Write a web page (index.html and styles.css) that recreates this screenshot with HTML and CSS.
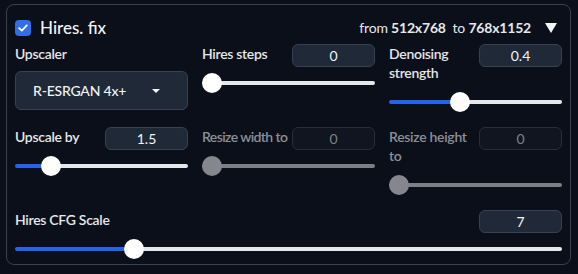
FILE: index.html
```html
<html lang="en">
	<head>
		<meta charset="UTF-8" />
		<meta name="viewport" content="width=device-width, initial-scale=1.0" />
		<title>Hires. fix</title>
		<link rel="stylesheet" href="styles.css">
	</head>
	<body>
		<div class="panel">
			<div class="panel-head">
				<label class="toggle">
					<span class="checkbox">
						<svg width="10" height="8" viewBox="0 0 10 8"><path d="M1.2 4.2 L3.8 6.6 L8.8 1.4" fill="none" stroke="#fff" stroke-width="1.8" stroke-linecap="round" stroke-linejoin="round"/></svg>
					</span>
					Hires. fix
				</label>
				<div class="summary">
					<span>from <b>512x768</b>&nbsp; to <b>768x1152</b></span>
					<span class="caret-big"></span>
				</div>
			</div>

			<div class="grid">
				<div class="field">
					<div class="field-top">
						<span class="label">Upscaler</span>
					</div>
					<div class="dropdown">
						<span>R-ESRGAN 4x+</span>
						<span class="caret"></span>
					</div>
				</div>

				<div class="field">
					<div class="field-top">
						<span class="label">Hires steps</span>
						<input class="num" type="number" value="0">
					</div>
					<input class="slider" type="range" min="0" max="150" value="0" style="--fill: 5%">
				</div>

				<div class="field">
					<div class="field-top">
						<span class="label">Denoising strength</span>
						<input class="num" type="number" value="0.4">
					</div>
					<input class="slider" type="range" min="0" max="1" step="0.01" value="0.4" style="--fill: 41%">
				</div>

				<div class="field">
					<div class="field-top">
						<span class="label">Upscale by</span>
						<input class="num" type="number" value="1.5">
					</div>
					<input class="slider" type="range" min="1" max="4" step="0.05" value="1.5" style="--fill: 21%">
				</div>

				<div class="field disabled">
					<div class="field-top">
						<span class="label nowrap">Resize width to</span>
						<input class="num" type="number" value="0" disabled>
					</div>
					<input class="slider" type="range" min="0" max="2048" value="0" disabled>
				</div>

				<div class="field disabled">
					<div class="field-top">
						<span class="label">Resize height to</span>
						<input class="num" type="number" value="0" disabled>
					</div>
					<input class="slider" type="range" min="0" max="2048" value="0" disabled>
				</div>

				<div class="field wide">
					<div class="field-top">
						<span class="label">Hires CFG Scale</span>
						<input class="num" type="number" value="7">
					</div>
					<input class="slider" type="range" min="1" max="30" step="0.5" value="7" style="--fill: 21.8%">
				</div>
			</div>
		</div>
	</body>
</html>
```

FILE: styles.css
```css
body {
	margin: 0;
	background: #0b0f19;
	font-family: Lato, "Noto Sans", sans-serif;
	color: #e5e7eb;
}
.panel {
	margin: 4px 0 0 6px;
	width: 547px;
	padding: 10px 8px 5px 8px;
	border: 1px solid #374151;
	border-radius: 8px;
}
.panel-head {
	display: flex;
	justify-content: space-between;
	align-items: center;
	height: 25px;
	margin-bottom: 4px;
}
.toggle {
	display: flex;
	align-items: center;
	gap: 9px;
	font-size: 17px;
	font-weight: 500;
	color: #f3f4f6;
}
.checkbox {
	width: 16px;
	height: 16px;
	border-radius: 4px;
	background: #2f6ee6;
	display: flex;
	align-items: center;
	justify-content: center;
}
.summary {
	display: flex;
	align-items: center;
	font-size: 14px;
	letter-spacing: -0.2px;
	color: #e5e7eb;
	padding-right: 5px;
	white-space: nowrap;
}
.summary b {
	font-weight: 700;
}
.caret-big {
	width: 0;
	height: 0;
	margin-left: 14px;
	border-left: 6px solid transparent;
	border-right: 6px solid transparent;
	border-top: 10px solid #f3f4f6;
}
.grid {
	display: grid;
	grid-template-columns: 173px 173px 173px;
	column-gap: 14px;
	row-gap: 15px;
}
.wide {
	grid-column: 1 / 4;
}
.field-top {
	display: flex;
	justify-content: space-between;
	align-items: flex-start;
	gap: 4px;
}
.label {
	font-size: 14px;
	font-weight: 600;
	letter-spacing: -0.3px;
	line-height: 19px;
	padding-bottom: 5px;
	color: #e5e7eb;
}
.nowrap {
	white-space: nowrap;
	letter-spacing: -0.6px;
	min-width: 0;
}
.num {
	flex: none;
	width: 83px;
	height: 23px;
	box-sizing: border-box;
	background: #1f2937;
	border: 1px solid #374151;
	border-radius: 6px;
	color: #f3f4f6;
	font-family: inherit;
	font-size: 14px;
	text-align: center;
	padding: 0;
	-moz-appearance: textfield;
}
.num::-webkit-inner-spin-button,
.num::-webkit-outer-spin-button {
	-webkit-appearance: none;
	margin: 0;
}
.dropdown {
	margin-top: 3px;
	height: 39px;
	box-sizing: border-box;
	background: #1f2937;
	border: 1px solid #374151;
	border-radius: 6px;
	display: flex;
	align-items: center;
	justify-content: space-between;
	padding: 0 27px 0 17px;
	font-size: 14px;
	font-weight: 500;
	letter-spacing: -0.2px;
	color: #f3f4f6;
}
.caret {
	width: 0;
	height: 0;
	border-left: 4px solid transparent;
	border-right: 4px solid transparent;
	border-top: 4px solid #f3f4f6;
}
.slider {
	-webkit-appearance: none;
	appearance: none;
	display: block;
	width: 100%;
	height: 20px;
	margin: 5px 0 0 0;
	background: transparent;
	--fill: 0%;
}
.slider::-webkit-slider-runnable-track {
	height: 4px;
	border-radius: 2px;
	background: linear-gradient(to right, #2563eb var(--fill), #e5e7eb var(--fill));
}
.slider::-webkit-slider-thumb {
	-webkit-appearance: none;
	width: 20px;
	height: 20px;
	margin-top: -8px;
	border-radius: 50%;
	background: #ffffff;
	border: none;
}
.disabled .label {
	color: #8b8f98;
}
.disabled .num {
	background: #111520;
	border-color: #272d39;
	color: #7d828c;
}
.disabled .slider::-webkit-slider-runnable-track {
	background: #7d7f86;
}
.disabled .slider::-webkit-slider-thumb {
	background: #86878e;
}
```
